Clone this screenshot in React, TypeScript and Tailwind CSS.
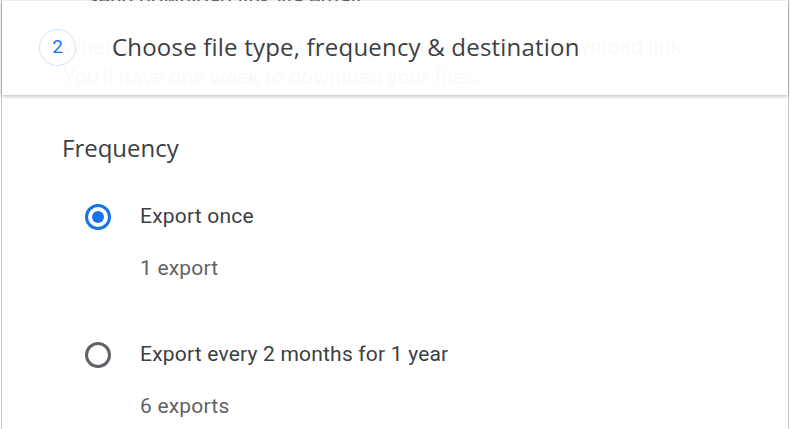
import React from "react";

function Radio({ checked }: { checked: boolean }) {
  return checked ? (
    <div className="w-[26px] h-[26px] rounded-full border-[3px] border-[#1a73e8] flex items-center justify-center">
      <div className="w-[12px] h-[12px] rounded-full bg-[#1a73e8]" />
    </div>
  ) : (
    <div className="w-[26px] h-[26px] rounded-full border-[3px] border-[#5f6368]" />
  );
}

export default function App() {
  const body = { fontFamily: "Roboto, 'Liberation Sans', sans-serif" };
  const gs = { fontFamily: "'Open Sans', Roboto, sans-serif" };
  return (
    <div className="w-[790px] h-[429px] bg-white overflow-hidden relative">
      <div className="relative ml-[1px] w-[788px] h-[460px] border-x border-[#c6c6c6] tracking-[0.2px]" style={body}>
        <div className="flex flex-col">
          <div className="mt-[-14px] h-[28px] leading-[28px] pl-[84px] text-[21px] text-[#5f6368]">
            Send download link via email
          </div>
          <div className="mt-[18px] pl-[61px] text-[21px] leading-[30px] text-[#5f6368] whitespace-nowrap">
            <div>When your files are ready, you'll get an email with a download link.</div>
            <div>You'll have one week to download your files.</div>
          </div>
          <div className="mt-[42px] pl-[60px] h-[28px] leading-[28px] text-[24px] text-[#3c4043] tracking-normal" style={gs}>
            Frequency
          </div>
          <div className="mt-[41px] flex items-center h-[28px] pl-[83px]">
            <Radio checked />
            <span className="ml-[29px] text-[21px] text-[#3c4043]">Export once</span>
          </div>
          <div className="mt-[23px] h-[28px] leading-[28px] pl-[138px] text-[21px] text-[#5f6368]">1 export</div>
          <div className="mt-[59px] flex items-center h-[28px] pl-[83px]">
            <Radio checked={false} />
            <span className="ml-[29px] text-[21px] text-[#3c4043]">Export every 2 months for 1 year</span>
          </div>
          <div className="mt-[23px] h-[28px] leading-[28px] pl-[138px] text-[21px] text-[#5f6368]">6 exports</div>
        </div>
        <div className="absolute left-0 right-0 top-[1px] h-[94px] bg-white/[0.96] shadow-[0_1px_4px_rgba(0,0,0,0.3)] flex items-center pl-[37px] pb-[2px]">
          <div className="w-[37px] h-[37px] rounded-full border border-[#d2e3fc] flex items-center justify-center text-[19px] text-[#1a73e8] tracking-normal" style={body}>
            2
          </div>
          <div className="ml-[36px] text-[24px] font-medium text-[#3c4043] tracking-[0.2px]" style={gs}>
            Choose file type, frequency &amp; destination
          </div>
        </div>
      </div>
    </div>
  );
}
